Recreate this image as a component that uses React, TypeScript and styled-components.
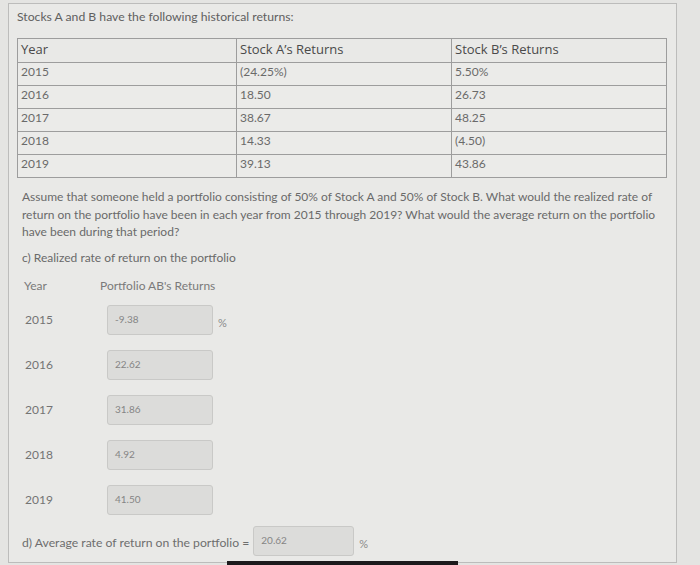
import React from "react";
import styled, { createGlobalStyle } from "styled-components";

const Global = createGlobalStyle`
  html, body { margin: 0; padding: 0; }
  body {
    background: #e4e4e2;
    width: 700px;
    height: 565px;
    overflow: hidden;
    font-family: Lato, "Liberation Sans", sans-serif;
  }
`;

const Screen = styled.div`
  position: relative;
  width: 700px;
  height: 565px;
  padding: 3px 0 0 8px;
  box-sizing: border-box;
`;

const Panel = styled.div`
  width: 669px;
  height: 560px;
  box-sizing: border-box;
  background: #e9e9e7;
  border: 1px solid #bcbcbb;
  padding: 5px 0 0 8px;
  display: flex;
  flex-direction: column;
`;

const Title = styled.div`
  font-size: 12.2px;
  color: #606060;
  line-height: 16px;
  height: 16px;
  margin-bottom: 13px;
`;

const Table = styled.table`
  border-collapse: collapse;
  width: 650px;
  table-layout: fixed;
`;

const HeadCell = styled.th`
  border: 1px solid #9d9d9d;
  height: 23px;
  padding: 0 3px;
  text-align: left;
  vertical-align: top;
  font-family: "Open Sans", "Noto Sans", sans-serif;
  font-weight: 400;
  font-size: 13px;
  line-height: 21px;
  color: #4a4a4a;
`;

const Col = styled.col<{ $w: number }>`
  width: ${(p) => p.$w}px;
`;

const Cell = styled.td`
  border: 1px solid #9d9d9d;
  height: 22px;
  padding: 0 3px;
  font-size: 12px;
  line-height: 18px;
  vertical-align: top;
  color: #6a6a6a;
  background: #ebebe9;
`;

const Question = styled.p`
  margin: 10px 0 0 5px;
  width: 645px;
  font-size: 12px;
  line-height: 17.5px;
  color: #6a6a6a;
`;

const SubHead = styled.div`
  margin: 9px 0 0 5px;
  font-size: 12px;
  line-height: 16px;
  color: #6a6a6a;
`;

const ColHeads = styled.div`
  margin: 12px 0 0 7px;
  display: grid;
  grid-template-columns: 76px auto;
  font-size: 12px;
  line-height: 16px;
  color: #7a7a7a;
`;

const Rows = styled.div`
  margin-top: 11px;
  display: flex;
  flex-direction: column;
  gap: 15px;
`;

const Row = styled.div`
  display: flex;
  align-items: center;
  padding-left: 8px;
`;

const YearLabel = styled.span`
  width: 82px;
  font-size: 12px;
  color: #747474;
`;

const InputBox = styled.div<{ $w: number }>`
  width: ${(p) => p.$w}px;
  height: 30px;
  box-sizing: border-box;
  background: #dcdcda;
  border: 1px solid #c9c9c7;
  border-radius: 3px;
  padding: 6px 0 0 7px;
  font-size: 10px;
  line-height: 14px;
  color: #858585;
`;

const Unit = styled.span`
  margin-left: 5px;
  padding-top: 6px;
  font-size: 11px;
  color: #8a8a8a;
`;

const AvgRow = styled.div`
  margin-top: 11px;
  padding-left: 5px;
  display: flex;
  align-items: center;
`;

const AvgLabel = styled.span`
  font-size: 12.2px;
  color: #6e6e6e;
  margin-right: 4px;
  padding-top: 3px;
`;

const BottomBar = styled.div`
  position: absolute;
  left: 227px;
  bottom: 0;
  width: 231px;
  height: 4px;
  background: #1c1a1c;
`;

const data = [
  ["2015", "(24.25%)", "5.50%"],
  ["2016", "18.50", "26.73"],
  ["2017", "38.67", "48.25"],
  ["2018", "14.33", "(4.50)"],
  ["2019", "39.13", "43.86"],
];

const portfolio = [
  ["2015", "-9.38"],
  ["2016", "22.62"],
  ["2017", "31.86"],
  ["2018", "4.92"],
  ["2019", "41.50"],
];

export default function App() {
  return (
    <>
      <Global />
      <Screen>
        <Panel>
          <Title>Stocks A and B have the following historical returns:</Title>
          <Table>
            <colgroup>
              <Col $w={219} />
              <Col $w={215} />
              <Col $w={215} />
            </colgroup>
            <thead>
              <tr>
                <HeadCell>Year</HeadCell>
                <HeadCell>Stock A’s Returns</HeadCell>
                <HeadCell>Stock B’s Returns</HeadCell>
              </tr>
            </thead>
            <tbody>
              {data.map((r) => (
                <tr key={r[0]}>
                  <Cell>{r[0]}</Cell>
                  <Cell>{r[1]}</Cell>
                  <Cell>{r[2]}</Cell>
                </tr>
              ))}
            </tbody>
          </Table>
          <Question>
            Assume that someone held a portfolio consisting of 50% of Stock A and 50% of Stock B. What would the
            realized rate of return on the portfolio have been in each year from 2015 through 2019? What would the
            average return on the portfolio have been during that period?
          </Question>
          <SubHead>c) Realized rate of return on the portfolio</SubHead>
          <ColHeads>
            <span>Year</span>
            <span>Portfolio AB's Returns</span>
          </ColHeads>
          <Rows>
            {portfolio.map((p, i) => (
              <Row key={p[0]}>
                <YearLabel>{p[0]}</YearLabel>
                <InputBox $w={106}>{p[1]}</InputBox>
                {i === 0 && <Unit>%</Unit>}
              </Row>
            ))}
          </Rows>
          <AvgRow>
            <AvgLabel>d) Average rate of return on the portfolio =</AvgLabel>
            <InputBox $w={101}>20.62</InputBox>
            <Unit>%</Unit>
          </AvgRow>
        </Panel>
        <BottomBar />
      </Screen>
    </>
  );
}
